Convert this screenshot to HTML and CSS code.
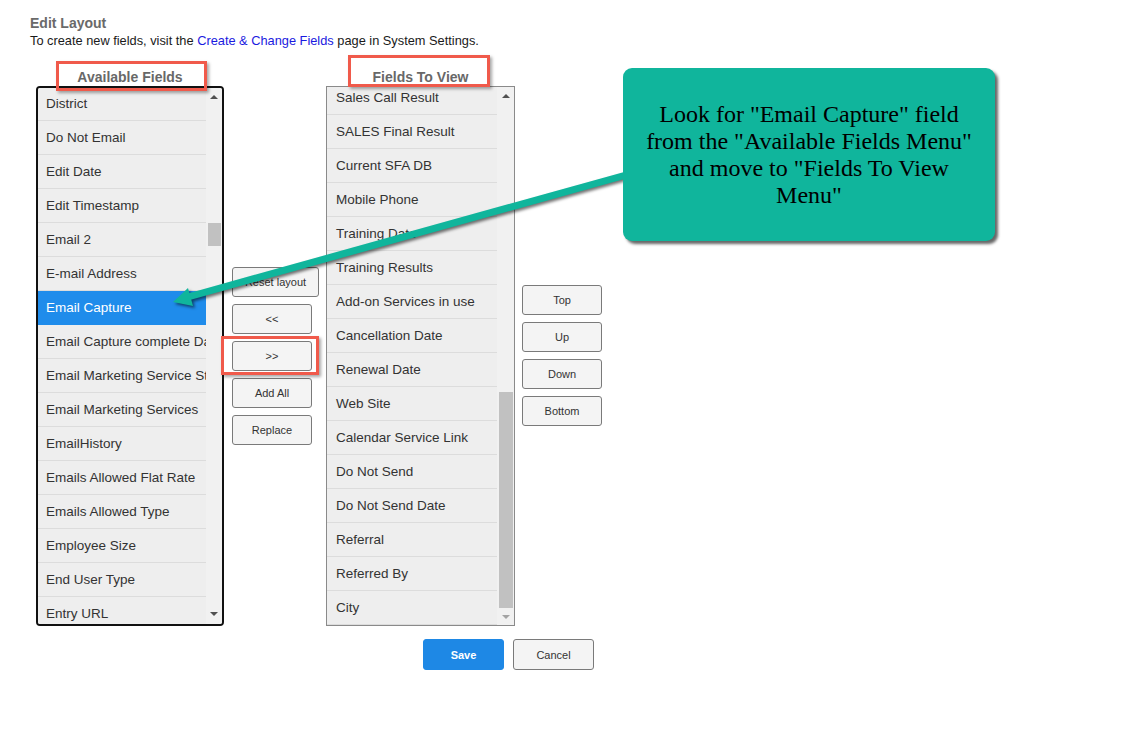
FILE: index.html
```html
<!DOCTYPE html>
<html>
<head>
<meta charset="utf-8">
<title>Edit Layout</title>
<link rel="stylesheet" href="styles.css">
</head>
<body>
<div class="page">
  <div class="title">Edit Layout</div>
  <div class="subtitle">To create new fields, visit the <a class="link">Create &amp; Change Fields</a> page in System Settings.</div>
  <div class="editor">
    <div class="col col-avail">
      <div class="col-head">Available Fields</div>
      <div class="listbox listbox-avail">
        <div class="items">
          <div class="items-inner items-inner-avail">
            <div class="item">District</div>
            <div class="item">Do Not Email</div>
            <div class="item">Edit Date</div>
            <div class="item">Edit Timestamp</div>
            <div class="item">Email 2</div>
            <div class="item">E-mail Address</div>
            <div class="item item-selected">Email Capture</div>
            <div class="item">Email Capture complete Date</div>
            <div class="item">Email Marketing Service Status</div>
            <div class="item">Email Marketing Services</div>
            <div class="item">EmailHistory</div>
            <div class="item">Emails Allowed Flat Rate</div>
            <div class="item">Emails Allowed Type</div>
            <div class="item">Employee Size</div>
            <div class="item">End User Type</div>
            <div class="item">Entry URL</div>
          </div>
        </div>
        <div class="sbar sbar-avail">
          <div class="sbar-btn"><span class="tri-up"></span></div>
          <div class="thumb thumb-avail"></div>
          <div class="sbar-btn sbar-btn-end"><span class="tri-down"></span></div>
        </div>
      </div>
    </div>
    <div class="btncol btncol-mid">
      <button class="btn btn-wide">Reset layout</button>
      <button class="btn">&lt;&lt;</button>
      <button class="btn">&gt;&gt;</button>
      <button class="btn">Add All</button>
      <button class="btn">Replace</button>
    </div>
    <div class="col col-view">
      <div class="col-head">Fields To View</div>
      <div class="listbox listbox-view">
        <div class="items">
          <div class="items-inner items-inner-view">
            <div class="item">Sales Call Result</div>
            <div class="item">SALES Final Result</div>
            <div class="item">Current SFA DB</div>
            <div class="item">Mobile Phone</div>
            <div class="item">Training Date</div>
            <div class="item">Training Results</div>
            <div class="item">Add-on Services in use</div>
            <div class="item">Cancellation Date</div>
            <div class="item">Renewal Date</div>
            <div class="item">Web Site</div>
            <div class="item">Calendar Service Link</div>
            <div class="item">Do Not Send</div>
            <div class="item">Do Not Send Date</div>
            <div class="item">Referral</div>
            <div class="item">Referred By</div>
            <div class="item">City</div>
          </div>
        </div>
        <div class="sbar sbar-view">
          <div class="sbar-btn"><span class="tri-up"></span></div>
          <div class="thumb thumb-view"></div>
          <div class="sbar-btn"><span class="tri-down tri-light"></span></div>
        </div>
      </div>
    </div>
    <div class="btncol btncol-right">
      <button class="btn">Top</button>
      <button class="btn">Up</button>
      <button class="btn">Down</button>
      <button class="btn">Bottom</button>
    </div>
  </div>
  <div class="footer">
    <button class="btn btn-primary">Save</button>
    <button class="btn">Cancel</button>
  </div>
</div>

<div class="mark mark-avail"></div>
<div class="mark mark-view"></div>
<div class="mark mark-move"></div>

<svg class="arrow-layer" width="1123" height="749" viewBox="0 0 1123 749">
  <g class="arrow-shape">
    <line x1="626" y1="175" x2="188" y2="297" stroke="#10b59c" stroke-width="7"/>
    <polygon points="173,302 193,306 188,288" fill="#10b59c"/>
  </g>
</svg>

<div class="callout">Look for "Email Capture" field from the "Available Fields Menu" and move to "Fields To View Menu"</div>
</body>
</html>
```

FILE: styles.css
```css
html, body {
  margin: 0;
  padding: 0;
  background: #ffffff;
}

body {
  font-family: "Liberation Sans", Arial, sans-serif;
  color: #333333;
  position: relative;
  width: 1123px;
  height: 749px;
  overflow: hidden;
}

.page {
  padding: 15px 30px 0 30px;
}

.title {
  font-size: 14px;
  font-weight: bold;
  line-height: 16px;
  color: #6a6a6a;
}

.subtitle {
  margin-top: 3px;
  font-size: 12.8px;
  line-height: 14px;
  color: #1a1a1a;
}

.link {
  color: #1a1ae0;
  text-decoration: none;
}

.editor {
  display: flex;
  align-items: flex-start;
  margin-top: 20px;
  padding-left: 6px;
}

.col {
  display: flex;
  flex-direction: column;
}

.col-avail {
  width: 188px;
}

.col-view {
  width: 189px;
  margin-left: 7px;
}

.col-head {
  height: 18px;
  line-height: 18px;
  text-align: center;
  font-size: 14px;
  font-weight: bold;
  color: #686868;
}

.listbox {
  box-sizing: border-box;
  height: 540px;
  display: flex;
  background: #eeeeee;
  overflow: hidden;
}

.listbox-avail {
  border: 2px solid #111111;
  border-radius: 4px;
}

.listbox-view {
  border: 1px solid #8a8a8a;
}

.items {
  flex: 1;
  overflow: hidden;
}

.items-inner-avail {
  margin-top: -1px;
}

.items-inner-view {
  margin-top: -6px;
}

.item {
  box-sizing: border-box;
  height: 34px;
  line-height: 33px;
  padding-left: 8px;
  font-size: 13.5px;
  color: #333333;
  white-space: nowrap;
  overflow: hidden;
  border-bottom: 1px solid #dcdcdc;
  background: #eeeeee;
}

.listbox-view .item {
  padding-left: 9px;
}

.item-selected {
  background: #1f8ceb;
  color: #ffffff;
  border-bottom-color: #1f8ceb;
}

.sbar {
  display: flex;
  flex-direction: column;
  background: #f1f1f1;
}

.sbar-avail {
  width: 16px;
}

.sbar-view {
  width: 17px;
}

.sbar-btn {
  height: 17px;
  display: flex;
  align-items: center;
  justify-content: center;
}

.sbar-btn-end {
  margin-top: auto;
  margin-bottom: 2px;
}

.tri-up {
  width: 0;
  height: 0;
  border-left: 4px solid transparent;
  border-right: 4px solid transparent;
  border-bottom: 4px solid #505050;
}

.tri-down {
  width: 0;
  height: 0;
  border-left: 4px solid transparent;
  border-right: 4px solid transparent;
  border-top: 4px solid #505050;
}

.tri-light {
  border-top-color: #a3a3a3;
}

.thumb {
  background: #c1c1c1;
  margin-left: 2px;
  margin-right: 1px;
}

.thumb-avail {
  margin-top: 118px;
  height: 23px;
}

.thumb-view {
  margin-top: 288px;
  height: 216px;
}

.btncol {
  display: flex;
  flex-direction: column;
  align-items: flex-start;
  gap: 7px;
}

.btncol-mid {
  margin-left: 8px;
  padding-top: 199px;
  width: 87px;
}

.btncol-right {
  margin-left: 7px;
  padding-top: 217px;
}

.btn {
  box-sizing: border-box;
  width: 80px;
  height: 31px;
  padding: 0;
  margin: 0;
  border: 1px solid #7a7a7a;
  border-radius: 3px;
  background: #f4f4f4;
  font-family: "Liberation Sans", Arial, sans-serif;
  font-size: 11px;
  color: #333333;
}

.btncol .btn {
  height: 30px;
}

.btn-wide {
  width: 87px;
}

.footer {
  display: flex;
  gap: 9px;
  margin-top: 13px;
  padding-left: 393px;
}

.btn-primary {
  width: 81px;
  background: #1e88e5;
  border-color: #1e88e5;
  color: #ffffff;
  font-weight: bold;
}

.footer .btn {
  width: 81px;
}

/* annotation overlays */
.mark {
  position: absolute;
  box-sizing: border-box;
  border: 3px solid #f05a4b;
  box-shadow: 2px 2px 3px rgba(0, 0, 0, 0.35);
}

.mark-avail {
  left: 56px;
  top: 61px;
  width: 151px;
  height: 30px;
}

.mark-view {
  left: 348px;
  top: 55px;
  width: 142px;
  height: 32px;
}

.mark-move {
  left: 221px;
  top: 336px;
  width: 98px;
  height: 39px;
}

.arrow-layer {
  position: absolute;
  left: 0;
  top: 0;
  pointer-events: none;
}

.arrow-shape {
  filter: drop-shadow(2px 2px 1.5px rgba(0, 0, 0, 0.55));
}

.callout {
  position: absolute;
  left: 623px;
  top: 68px;
  width: 372px;
  height: 173px;
  box-sizing: border-box;
  padding: 33px 18px 0 18px;
  background: #10b59c;
  border-radius: 9px;
  box-shadow: 3px 3px 3px rgba(0, 0, 0, 0.6);
  font-family: "Liberation Serif", "Times New Roman", serif;
  font-size: 24px;
  line-height: 27px;
  text-align: center;
  color: #000000;
}
```
